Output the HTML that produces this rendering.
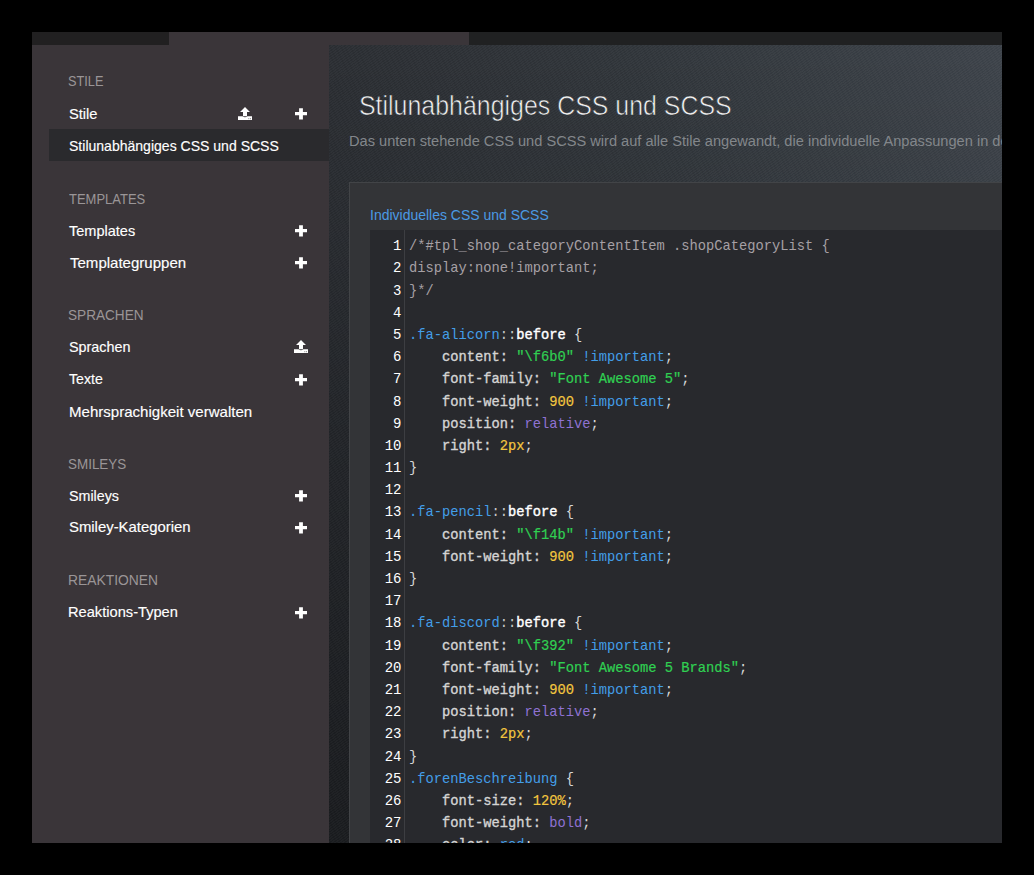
<!DOCTYPE html>
<html><head><meta charset="utf-8">
<style>
*{margin:0;padding:0;box-sizing:border-box}
html,body{width:1034px;height:875px;background:#000;overflow:hidden}
body{position:relative;font-family:"Liberation Sans",sans-serif}
#frame{position:absolute;left:32px;top:32px;width:970px;height:811px;background:#3a3539;overflow:hidden}
#tb1{position:absolute;left:0;top:0;width:137px;height:13px;background:#212021}
#tb2{position:absolute;left:437px;top:0;width:533px;height:13px;background:#202122}
.hd,.it{position:absolute;white-space:nowrap;transform-origin:0 0;line-height:20px}
.hd{font-size:15px;color:#9a9597}
.it{font-size:15px;color:#fff;-webkit-text-stroke:0.15px #fff}
.act{position:absolute;left:17px;top:97px;width:280px;height:32px;background:#2a2a2d}
.ic{position:absolute}
#main{position:absolute;left:297px;top:13px;width:673px;height:798px;overflow:hidden;
 background-image:repeating-linear-gradient(-36deg, rgba(255,255,255,0.022) 0 1.2px, rgba(0,0,0,0.03) 1.2px 2.2px), linear-gradient(to bottom, rgba(0,0,0,0) 0px, rgba(0,0,0,0.05) 140px, rgba(0,0,0,0.22) 400px, rgba(0,0,0,0.4) 798px), linear-gradient(to right, #2b2e33 0%, #31363b 45%, #3e444b 100%)}
#title{position:absolute;left:30px;top:44.2px;font-size:28px;line-height:34px;color:#f0f0f0;-webkit-text-stroke:0.7px rgba(46,50,55,0.9);white-space:nowrap;transform-origin:0 0;transform:scaleX(0.89)}
#sub{position:absolute;left:20px;top:87px;font-size:14px;line-height:18px;color:#83878b;white-space:nowrap;transform-origin:0 0;transform:scaleX(1.0437)}
#panel{position:absolute;left:20px;top:137px;width:700px;height:700px;background:#333437;border:1px solid #424447}
#ptitle{position:absolute;left:20px;top:22px;font-size:15px;line-height:20px;color:#4b9ae4;white-space:nowrap;transform-origin:0 0;transform:scaleX(0.932)}
#editor{position:absolute;left:20px;top:47px;width:700px;height:700px;background:#28292d}
#gutter{position:absolute;left:0;top:0;width:35px;height:100%;background:#28292d;border-right:1px solid #3d3e42}
#lines{position:absolute;left:0;top:5.2px;width:31.5px;text-align:right;font-family:"Liberation Mono",monospace;font-size:14px;line-height:22.18px;color:#fff}
#code{position:absolute;left:39px;top:6.2px;font-family:"Liberation Mono",monospace;font-size:13.75px;line-height:22.18px;color:#d8d8d8;white-space:pre}
.cm{color:#a6a0a5}
.cl{color:#439ee8}
.kw{color:#fff;-webkit-text-stroke:0.4px #fff}
.pr{color:#d6d6d6;-webkit-text-stroke:0.35px #d2d2d2}
.op{color:#c8c8c8}
.st{color:#30d052;-webkit-text-stroke:0.2px #30d052}
.nu{color:#f3c63f;-webkit-text-stroke:0.2px #f3c63f}
.im{color:#439ee8}
.at{color:#8f72d2}
</style></head><body>
<div id="frame">
 <div id="tb1"></div><div id="tb2"></div>
 <div class="act"></div>
<div class="hd" style="left:35.5px;top:39.0px;transform:scaleX(0.85)">STILE</div>
<div class="it" style="left:36.5px;top:72.4px;transform:scaleX(0.9771)">Stile</div>
<div class="it" style="left:36.5px;top:103.5px;transform:scaleX(0.9355)">Stilunabhängiges CSS und SCSS</div>
<div class="hd" style="left:37.1px;top:156.6px;transform:scaleX(0.8654)">TEMPLATES</div>
<div class="it" style="left:37.1px;top:188.5px;transform:scaleX(0.9683)">Templates</div>
<div class="it" style="left:37.9px;top:220.5px;transform:scaleX(1.0018)">Templategruppen</div>
<div class="hd" style="left:35.9px;top:273.0px;transform:scaleX(0.9069)">SPRACHEN</div>
<div class="it" style="left:36.5px;top:304.7px;transform:scaleX(0.9575)">Sprachen</div>
<div class="it" style="left:36.5px;top:337.2px;transform:scaleX(0.9423)">Texte</div>
<div class="it" style="left:36.9px;top:369.8px;transform:scaleX(1.0033)">Mehrsprachigkeit verwalten</div>
<div class="hd" style="left:35.5px;top:421.9px;transform:scaleX(0.8954)">SMILEYS</div>
<div class="it" style="left:36.5px;top:453.6px;transform:scaleX(0.9511)">Smileys</div>
<div class="it" style="left:36.5px;top:485.4px;transform:scaleX(0.9918)">Smiley-Kategorien</div>
<div class="hd" style="left:35.5px;top:537.7px;transform:scaleX(0.9225)">REAKTIONEN</div>
<div class="it" style="left:35.5px;top:570.3px;transform:scaleX(0.9764)">Reaktions-Typen</div>
<svg class="ic" width="14" height="14" viewBox="0 0 14 14" style="left:206px;top:75px"><path fill="#fff" d="M7 0 L12 5 L9 5 L9 9.3 L5 9.3 L5 5 L2 5 Z"/><path fill="#fff" d="M0 9.3 H4.6 Q7 11 9.4 9.3 H14 V13.1 H0 Z"/><rect x="10.3" y="11.2" width="1" height="1" fill="#888"/><rect x="12" y="11.2" width="1" height="1" fill="#888"/></svg>
<svg class="ic" width="12" height="12" viewBox="0 0 12 12" style="left:263px;top:75.5px"><path fill="#fff" d="M4.1 0.2 H7.9 V4.1 H12 V7.3 H7.9 V11.4 H4.1 V7.3 H0 V4.1 H4.1 Z"/></svg>
<svg class="ic" width="12" height="12" viewBox="0 0 12 12" style="left:263px;top:192.5px"><path fill="#fff" d="M4.1 0.2 H7.9 V4.1 H12 V7.3 H7.9 V11.4 H4.1 V7.3 H0 V4.1 H4.1 Z"/></svg>
<svg class="ic" width="12" height="12" viewBox="0 0 12 12" style="left:263px;top:224.5px"><path fill="#fff" d="M4.1 0.2 H7.9 V4.1 H12 V7.3 H7.9 V11.4 H4.1 V7.3 H0 V4.1 H4.1 Z"/></svg>
<svg class="ic" width="14" height="14" viewBox="0 0 14 14" style="left:262px;top:308px"><path fill="#fff" d="M7 0 L12 5 L9 5 L9 9.3 L5 9.3 L5 5 L2 5 Z"/><path fill="#fff" d="M0 9.3 H4.6 Q7 11 9.4 9.3 H14 V13.1 H0 Z"/><rect x="10.3" y="11.2" width="1" height="1" fill="#888"/><rect x="12" y="11.2" width="1" height="1" fill="#888"/></svg>
<svg class="ic" width="12" height="12" viewBox="0 0 12 12" style="left:263px;top:341.5px"><path fill="#fff" d="M4.1 0.2 H7.9 V4.1 H12 V7.3 H7.9 V11.4 H4.1 V7.3 H0 V4.1 H4.1 Z"/></svg>
<svg class="ic" width="12" height="12" viewBox="0 0 12 12" style="left:263px;top:457.5px"><path fill="#fff" d="M4.1 0.2 H7.9 V4.1 H12 V7.3 H7.9 V11.4 H4.1 V7.3 H0 V4.1 H4.1 Z"/></svg>
<svg class="ic" width="12" height="12" viewBox="0 0 12 12" style="left:263px;top:489.5px"><path fill="#fff" d="M4.1 0.2 H7.9 V4.1 H12 V7.3 H7.9 V11.4 H4.1 V7.3 H0 V4.1 H4.1 Z"/></svg>
<svg class="ic" width="12" height="12" viewBox="0 0 12 12" style="left:263px;top:574.5px"><path fill="#fff" d="M4.1 0.2 H7.9 V4.1 H12 V7.3 H7.9 V11.4 H4.1 V7.3 H0 V4.1 H4.1 Z"/></svg>
 <div id="main">
  <div id="title">Stilunabhängiges CSS und SCSS</div>
  <div id="sub">Das unten stehende CSS und SCSS wird auf alle Stile angewandt, die individuelle Anpassungen in der Stilverwaltung erlauben.</div>
  <div id="panel">
   <div id="ptitle">Individuelles CSS und SCSS</div>
   <div id="editor">
    <div id="gutter"></div>
    <div id="lines">1<br>2<br>3<br>4<br>5<br>6<br>7<br>8<br>9<br>10<br>11<br>12<br>13<br>14<br>15<br>16<br>17<br>18<br>19<br>20<br>21<br>22<br>23<br>24<br>25<br>26<br>27<br>28<br>29</div>
<div id="code"><span class="cm">/*#tpl_shop_categoryContentItem .shopCategoryList {
display:none!important;
}*/</span>

<span class="cl">.fa-alicorn</span><span class="op">::</span><span class="kw">before</span> {
    <span class="pr">content:</span> <span class="st">"\f6b0"</span> <span class="im">!important</span>;
    <span class="pr">font-family:</span> <span class="st">"Font Awesome 5"</span>;
    <span class="pr">font-weight:</span> <span class="nu">900</span> <span class="im">!important</span>;
    <span class="pr">position:</span> <span class="at">relative</span>;
    <span class="pr">right:</span> <span class="nu">2px</span>;
}

<span class="cl">.fa-pencil</span><span class="op">::</span><span class="kw">before</span> {
    <span class="pr">content:</span> <span class="st">"\f14b"</span> <span class="im">!important</span>;
    <span class="pr">font-weight:</span> <span class="nu">900</span> <span class="im">!important</span>;
}

<span class="cl">.fa-discord</span><span class="op">::</span><span class="kw">before</span> {
    <span class="pr">content:</span> <span class="st">"\f392"</span> <span class="im">!important</span>;
    <span class="pr">font-family:</span> <span class="st">"Font Awesome 5 Brands"</span>;
    <span class="pr">font-weight:</span> <span class="nu">900</span> <span class="im">!important</span>;
    <span class="pr">position:</span> <span class="at">relative</span>;
    <span class="pr">right:</span> <span class="nu">2px</span>;
}
<span class="cl">.forenBeschreibung</span> {
    <span class="pr">font-size:</span> <span class="nu">120%</span>;
    <span class="pr">font-weight:</span> <span class="at">bold</span>;
    <span class="pr">color:</span> <span class="im">red</span>;
}
</div>
   </div>
  </div>
 </div>
</div>
</body></html>
